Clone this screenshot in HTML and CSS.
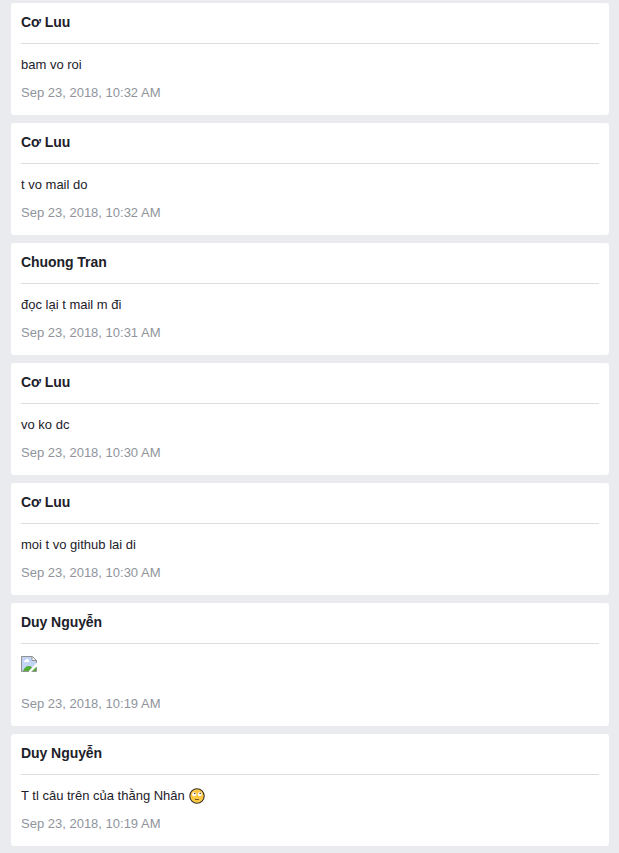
FILE: index.html
```html
<!DOCTYPE html>
<html lang="vi">
<head>
<meta charset="utf-8">
<title>Messages</title>
<link rel="stylesheet" href="styles.css">
</head>
<body>
<main class="thread">
  <article class="card"><h2 class="name">Cơ Luu</h2><div class="message">bam vo roi</div><time class="date">Sep 23, 2018, 10:32 AM</time></article>
  <article class="card"><h2 class="name">Cơ Luu</h2><div class="message">t vo mail do</div><time class="date">Sep 23, 2018, 10:32 AM</time></article>
  <article class="card"><h2 class="name">Chuong Tran</h2><div class="message">đọc lại t mail m đi</div><time class="date">Sep 23, 2018, 10:31 AM</time></article>
  <article class="card"><h2 class="name">Cơ Luu</h2><div class="message">vo ko dc</div><time class="date">Sep 23, 2018, 10:30 AM</time></article>
  <article class="card"><h2 class="name">Cơ Luu</h2><div class="message">moi t vo github lai di</div><time class="date">Sep 23, 2018, 10:30 AM</time></article>
  <article class="card"><h2 class="name">Duy Nguyễn</h2><div class="message message-image">
    <svg class="broken" width="16" height="16" viewBox="0 0 16 16">
      <path fill="#c3d5f5" d="M1 1h10l4 4v3l-7 7H1z"/>
      <path fill="#fff" d="M3 6V5h1V4h1V3h2v1h1v2zM11 1l4 4h-4z"/>
      <path fill="#53ae35" d="M2 15c1-3 3-5 6-5 1.500 0 2.500.7 3 1.500L8 15zM11 15l4-4v4z"/>
      <path fill="none" stroke="#929292" d="M15.500 7V4.500l-4-4H.5v15H8M11 .5v4h4.500M10.500 15.500h5V11"/>
      <path fill="none" stroke="#fff" stroke-width="1.800" d="M8.500 16 16 8.500"/>
    </svg></div><time class="date">Sep 23, 2018, 10:19 AM</time></article>
  <article class="card"><h2 class="name">Duy Nguyễn</h2><div class="message">T tl câu trên của thằng Nhân
    <svg class="emoji" width="16" height="16" viewBox="0 0 16 16">
      <circle cx="8" cy="8" r="7.200" fill="#fdc843" stroke="#3b3027" stroke-width="1.100"/>
      <circle cx="5.200" cy="6.300" r="2" fill="#fff"/><circle cx="10.800" cy="6.300" r="2" fill="#fff"/>
      <circle cx="5.700" cy="5.500" r=".8" fill="#5b4938"/><circle cx="11.200" cy="5.500" r=".8" fill="#5b4938"/>
      <path stroke="#7a5620" d="M6 11.500h4"/>
    </svg></div><time class="date">Sep 23, 2018, 10:19 AM</time></article>
</main>
</body>
</html>
```
FILE: styles.css
```css
body {
  margin: 0;
  background: #e9ebee;
  color: #1d2129;
  font-family: "Liberation Sans", Arial, sans-serif;
}
.thread {
  display: flex;
  flex-direction: column;
  gap: 8px;
  padding: 3px 10px 7px 11px;
}
.card {
  box-sizing: border-box;
  padding: 10px 10px 14px;
  border-radius: 3px;
  background: #fff;
}
.name {
  box-sizing: border-box;
  height: 31px;
  margin: 0 0 12px;
  border-bottom: 1px solid #dadde1;
  font-size: 14px;
  line-height: 18px;
  letter-spacing: -0.06px;
}
.message {
  height: 18px;
  font-size: 13px;
  line-height: 18px;
}
.message-image {
  height: 29px;
}
.broken {
  display: block;
}
.emoji {
  margin-left: 1px;
  vertical-align: -4px;
}
.date {
  display: block;
  margin-top: 10px;
  color: #90949c;
  font-size: 13px;
  line-height: 17px;
}
```
